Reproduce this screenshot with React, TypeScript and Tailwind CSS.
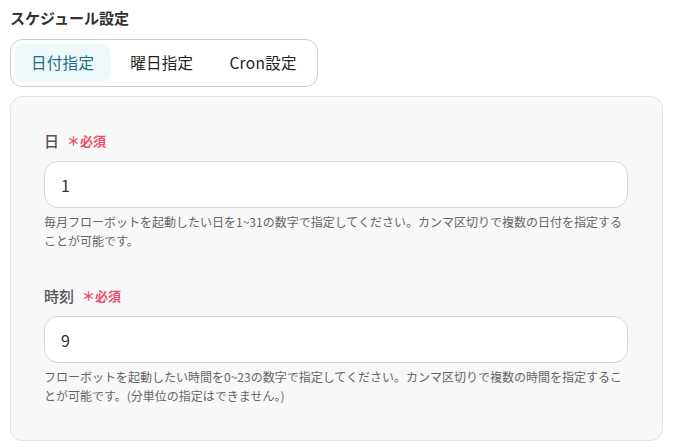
import React, { useState } from 'react';

const tabs = ['日付指定', '曜日指定', 'Cron設定'];

function Field({ label, value, help }: { label: string; value: string; help: string }) {
  return (
    <div>
      <div className="flex items-center h-[22px] mb-[9px]">
        <span className="text-[15px] font-medium text-[#555]">{label}</span>
        <span className="ml-[8px] text-[13px] font-bold text-[#ef4d6a]">＊必須</span>
      </div>
      <input
        type="text"
        defaultValue={value}
        className="w-full h-[47px] px-[16px] text-[16px] text-[#333] bg-white border border-[#d3d7de] rounded-[14px] outline-none"
      />
      <p className="mt-[4px] text-[12px] leading-[19px] text-[#666]">{help}</p>
    </div>
  );
}

export default function App() {
  const [active, setActive] = useState(0);

  return (
    <div
      className="w-[677px] h-[447px] bg-white pl-[10px] pr-[14px] pt-[7px]"
      style={{ fontFamily: '"Noto Sans CJK JP", "Noto Sans", sans-serif' }}
    >
      <h2 className="text-[15px] font-bold text-[#333] leading-[22px]">スケジュール設定</h2>

      <div className="mt-[10px] inline-flex gap-1 p-1 border border-[#cfcfcf] rounded-[12px] bg-white">
        {tabs.map((t, i) => (
          <button
            key={t}
            onClick={() => setActive(i)}
            className={
              i === active
                ? 'h-[38px] px-4 rounded-[8px] text-[15.5px] tracking-[0.3px] bg-[#eef8f8] text-[#1b6d88]'
                : 'h-[38px] px-4 rounded-[8px] text-[15.5px] tracking-[0.3px] text-[#222]'
            }
          >
            {t}
          </button>
        ))}
      </div>

      <div className="mt-[9px] bg-[#f8f8f8] border border-[#e3e3e3] rounded-[12px] pl-[33px] pr-[34px] pt-[33px] pb-[35px] flex flex-col gap-[35px]">
        <Field
          label="日"
          value="1"
          help="毎月フローボットを起動したい日を1~31の数字で指定してください。カンマ区切りで複数の日付を指定することが可能です。"
        />
        <Field
          label="時刻"
          value="9"
          help="フローボットを起動したい時間を0~23の数字で指定してください。カンマ区切りで複数の時間を指定することが可能です。(分単位の指定はできません。)"
        />
      </div>
    </div>
  );
}
